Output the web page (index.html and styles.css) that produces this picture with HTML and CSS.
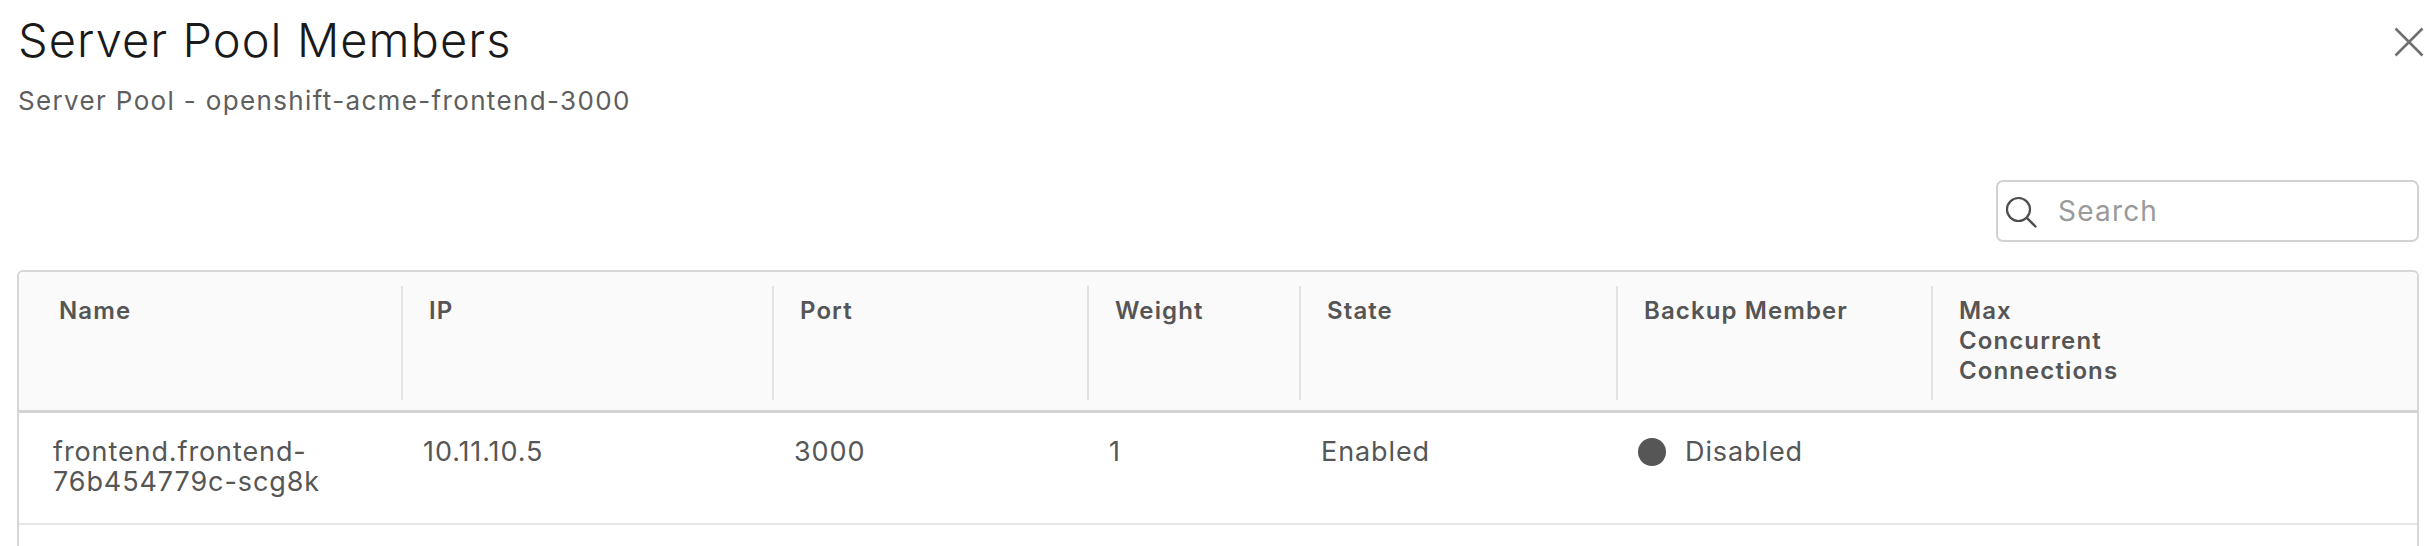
FILE: index.html
```html
<!DOCTYPE html>
<html lang="en">
<head>
<meta charset="utf-8">
<title>Server Pool Members</title>
<link rel="stylesheet" href="styles.css">
</head>
<body>
<div class="modal">
  <header class="modal-header">
    <div class="titles">
      <h1 class="title">Server Pool Members</h1>
      <p class="subtitle">Server Pool - openshift-acme-frontend-3000</p>
    </div>
    <button class="close" aria-label="Close">
      <svg viewBox="0 0 30 30" width="30" height="30"><path d="M1.5 1.5 L28.5 28.5 M28.5 1.5 L1.5 28.5" stroke="#707070" stroke-width="2.6" fill="none"/></svg>
    </button>
  </header>
  <div class="toolbar">
    <label class="search">
      <svg class="search-icon" viewBox="0 0 32 32" width="32" height="32"><circle cx="13.5" cy="13.5" r="11.5" stroke="#4d4d4d" stroke-width="2.2" fill="none"/><path d="M21.8 21.8 L30.5 30.5" stroke="#4d4d4d" stroke-width="2.4" stroke-linecap="round"/></svg>
      <input type="text" placeholder="Search">
    </label>
  </div>
  <div class="grid">
    <div class="row head">
      <div class="th first"><div class="th-in">Name</div></div>
      <div class="th"><div class="th-in sep">IP</div></div>
      <div class="th"><div class="th-in sep">Port</div></div>
      <div class="th"><div class="th-in sep">Weight</div></div>
      <div class="th"><div class="th-in sep">State</div></div>
      <div class="th"><div class="th-in sep">Backup Member</div></div>
      <div class="th"><div class="th-in sep">Max<br>Concurrent<br>Connections</div></div>
    </div>
    <div class="row body">
      <div class="td first">frontend.frontend-<br>76b454779c-scg8k</div>
      <div class="td">10.11.10.5</div>
      <div class="td">3000</div>
      <div class="td">1</div>
      <div class="td">Enabled</div>
      <div class="td"><span class="status"><span class="dot"></span>Disabled</span></div>
      <div class="td"></div>
    </div>
    <div class="filler"></div>
  </div>
</div>
</body>
</html>
```
FILE: styles.css
```css
* { box-sizing: border-box; }
html, body { margin: 0; padding: 0; background: #fff; }
body {
  font-family: "Inter", "Lato", sans-serif;
  color: #565656;
  overflow: hidden;
}
.modal { padding: 0 13px 0 17px; }
.modal-header {
  display: flex;
  justify-content: space-between;
  align-items: flex-start;
}
.titles { padding-left: 1px; }
.title {
  margin: 0;
  padding-top: 12px;
  font-size: 47px;
  line-height: 56px;
  font-weight: 300;
  color: #1a1a1a;
  letter-spacing: 1.05px;
}
.subtitle {
  margin: 0;
  padding-top: 18px;
  font-size: 26px;
  line-height: 30px;
  color: #5e5e5e;
  letter-spacing: 1.35px;
}
.close {
  margin: 27px -5px 0 0;
  padding: 0;
  border: 0;
  background: none;
  width: 30px;
  height: 30px;
}
.close svg { display: block; }
.toolbar {
  display: flex;
  justify-content: flex-end;
  padding-top: 64px;
}
.search {
  width: 423px;
  height: 62px;
  border: 2px solid #d2d2d2;
  border-radius: 7px;
  display: flex;
  align-items: center;
  padding-left: 7px;
  gap: 21px;
}
.search-icon { flex: none; display: block; margin-top: 2px; }
.search input {
  border: 0;
  outline: none;
  font-family: inherit;
  font-size: 28px;
  color: #565656;
  width: 300px;
  padding: 0;
  background: transparent;
  letter-spacing: 1.2px;
}
.search input::placeholder { color: #9a9a9a; }
.grid {
  margin-top: 28px;
  border: 2px solid #d7d7d7;
  border-bottom: 0;
  border-radius: 6px 6px 0 0;
  height: 280px;
}
.row {
  display: grid;
  grid-template-columns: 382px 371px 315px 212px 317px 315px 1fr;
}
.head {
  height: 141px;
  background: #fafafa;
  border-bottom: 3px solid #d4d4d4;
  border-radius: 6px 6px 0 0;
}
.th { padding: 14px 0 10px 0; }
.th-in {
  height: 100%;
  padding: 10px 0 0 28px;
  font-size: 24px;
  line-height: 30px;
  font-weight: 600;
  color: #555;
  letter-spacing: 1.1px;
}
.th-in.sep { border-left: 2px solid #e2e2e2; padding-left: 26px; }
.th.first .th-in { padding-left: 40px; }
.body {
  height: 112px;
  border-bottom: 2px solid #e6e6e6;
}
.td {
  padding: 24px 0 0 22px;
  font-size: 27px;
  line-height: 30px;
  color: #565656;
  letter-spacing: 0.9px;
}
.td.first { padding-left: 34px; }
.status { display: inline-flex; align-items: center; gap: 19px; }
.dot {
  width: 28px;
  height: 28px;
  border-radius: 50%;
  background: #565656;
  display: inline-block;
}
.filler { height: 40px; }
```
